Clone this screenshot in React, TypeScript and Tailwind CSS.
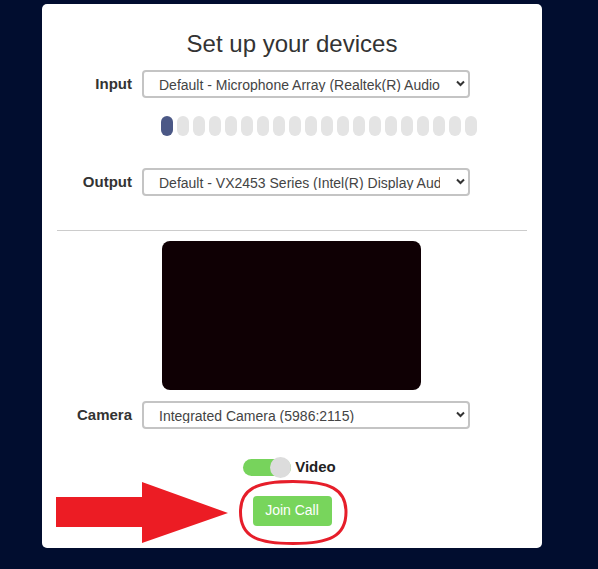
import React from "react";

function Chevron() {
  return (
    <svg width="9" height="7" viewBox="0 0 9 7" className="absolute right-[3px] top-[8px]">
      <path d="M1 1.5 L4.5 5 L8 1.5" fill="none" stroke="#333" strokeWidth="2" />
    </svg>
  );
}

function FakeSelect({ text }: { text: string }) {
  return (
    <div className="relative h-[28px] w-[328px] rounded-[4px] border-2 border-[#c4c4c4] bg-white">
      <div className="absolute left-[15px] top-[3px] h-[17px] w-[281px] overflow-hidden whitespace-nowrap text-[14px] leading-[20px] text-[#444]">
        {text}
      </div>
      <Chevron />
    </div>
  );
}

function Row({ label, text }: { label: string; text: string }) {
  return (
    <div className="flex items-center">
      <div className="w-[90px] text-right text-[15px] font-bold text-[#333]">{label}</div>
      <div className="ml-[10px]">
        <FakeSelect text={text} />
      </div>
    </div>
  );
}

export default function App() {
  return (
    <div className="relative min-h-[569px] w-[598px] bg-[#010d2f] pt-[4px]" style={{ fontFamily: '"Liberation Sans", Arial, sans-serif' }}>
      <div className="relative ml-[42px] h-[544px] w-[500px] rounded-[5px] bg-white">
        <div className="flex flex-col">
          <h1 className="mt-[26px] text-center text-[24px] leading-[28px] text-[#333]">Set up your devices</h1>
          <div className="mt-[12px]">
            <Row label="Input" text="Default - Microphone Array (Realtek(R) Audio)" />
          </div>
          <div className="ml-[119px] mt-[18px] flex gap-[4px]">
            {Array.from({ length: 20 }).map((_, i) => (
              <div key={i} className={i === 0 ? "h-[20px] w-[12px] rounded-full bg-[#4b5886]" : "h-[20px] w-[12px] rounded-full bg-[#e4e4e4]"} />
            ))}
          </div>
          <div className="mt-[32px]">
            <Row label="Output" text="Default - VX2453 Series (Intel(R) Display Audio)" />
          </div>
          <div className="mx-[15px] mt-[34px] h-px bg-[#cccccc]" />
          <div className="ml-[120px] mt-[10px] h-[149px] w-[259px] rounded-[8px] bg-[#0f0004]" />
          <div className="mt-[11px]">
            <Row label="Camera" text="Integrated Camera (5986:2115)" />
          </div>
          <div className="mt-[27px] flex items-center justify-center pr-[5px]">
            <div className="relative h-[17px] w-[48px] rounded-full bg-[#77d35c]">
              <div className="absolute right-0 top-[-2px] h-[21px] w-[21px] rounded-full bg-[#dcdcdc]" />
            </div>
            <span className="ml-[4px] text-[15px] font-bold text-[#222]">Video</span>
          </div>
          <div className="mt-[17px] flex justify-center">
            <button className="h-[30px] w-[79px] rounded-[4px] bg-[#78d55c] text-[14px] text-white">Join Call</button>
          </div>
        </div>
      </div>
      <svg className="absolute left-0 top-0" width="598" height="569" viewBox="0 0 598 569">
        <polygon points="56,497 142,497 142,482 228,513 142,543 142,527 56,527" fill="#ec1c24" />
        <path d="M293 481.5 C330 481.5 346 489 346 512 C346 536 330 543.5 293 543.5 C256 543.5 240.5 536 240.5 512 C240.5 489 256 481.5 293 481.5 Z" fill="none" stroke="#e61e2a" strokeWidth="3" />
      </svg>
    </div>
  );
}
